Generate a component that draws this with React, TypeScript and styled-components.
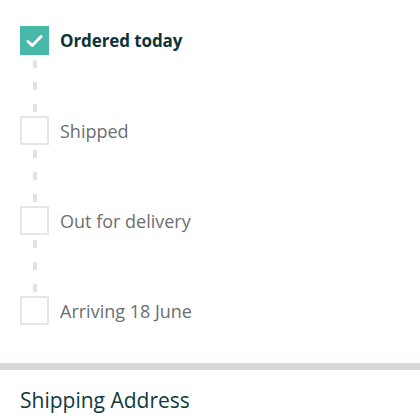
import React from 'react';
import styled, { createGlobalStyle } from 'styled-components';

const GlobalStyle = createGlobalStyle`
  html, body {
    margin: 0;
    padding: 0;
    background: #ffffff;
  }
  body {
    font-family: "Open Sans", "Noto Sans", "Liberation Sans", sans-serif;
  }
`;

const Page = styled.div`
  width: 420px;
  height: 420px;
  overflow: hidden;
  display: flex;
  flex-direction: column;
`;

const Timeline = styled.ol`
  list-style: none;
  margin: 0;
  padding: 26px 20px 0;
  display: flex;
  flex-direction: column;
`;

const Step = styled.li`
  display: flex;
  align-items: center;
  gap: 11px;
  height: 29px;
`;

const Box = styled.span<{ $done?: boolean }>`
  box-sizing: border-box;
  width: 29px;
  height: 29px;
  flex: 0 0 29px;
  display: flex;
  align-items: center;
  justify-content: center;
  background: ${({ $done }) => ($done ? '#48b9a9' : '#ffffff')};
  border: ${({ $done }) => ($done ? 'none' : '2px solid #e6e6e6')};
`;

const Label = styled.span<{ $done?: boolean }>`
  font-size: ${({ $done }) => ($done ? '17px' : '18px')};
  letter-spacing: ${({ $done }) => ($done ? '-0.1px' : '0')};
  font-weight: ${({ $done }) => ($done ? 700 : 400)};
  color: ${({ $done }) => ($done ? '#0e3438' : '#6b7070')};
`;

const Connector = styled.li`
  width: 4px;
  height: 61px;
  margin-left: 13px;
  background: repeating-linear-gradient(
    to bottom,
    transparent 0,
    transparent 5px,
    #e3e3e3 5px,
    #e3e3e3 13px,
    transparent 13px,
    transparent 22px
  );
`;

const Divider = styled.hr`
  margin: 38px 0 0;
  border: none;
  height: 7px;
  background: #d8dada;
`;

const SectionTitle = styled.h2`
  margin: 0;
  padding: 16px 20px 0;
  font-size: 21px;
  font-weight: 400;
  color: #0f3a3e;
`;

const Check = () => (
  <svg width="17" height="14" viewBox="0 0 17 14" fill="none">
    <path d="M2 7.5 L6.3 11.5 L15 2.5" stroke="#ffffff" strokeWidth="3" strokeLinecap="round" strokeLinejoin="round" />
  </svg>
);

const steps = [
  { label: 'Ordered today', done: true },
  { label: 'Shipped', done: false },
  { label: 'Out for delivery', done: false },
  { label: 'Arriving 18 June', done: false },
];

export default function App() {
  return (
    <Page>
      <GlobalStyle />
      <Timeline>
        {steps.map((s, i) => (
          <React.Fragment key={s.label}>
            {i > 0 && <Connector aria-hidden />}
            <Step>
              <Box $done={s.done}>{s.done && <Check />}</Box>
              <Label $done={s.done}>{s.label}</Label>
            </Step>
          </React.Fragment>
        ))}
      </Timeline>
      <Divider />
      <SectionTitle>Shipping Address</SectionTitle>
    </Page>
  );
}
